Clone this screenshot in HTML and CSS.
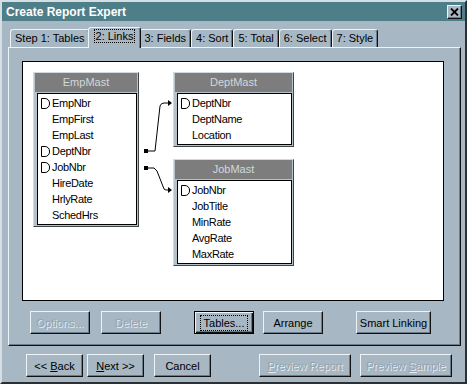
FILE: index.html
```html
<!DOCTYPE html>
<html lang="en">
<head>
	<meta charset="utf-8" />
	<title>Create Report Expert</title>
	<link rel="stylesheet" href="styles.css">
</head>
<body>
	<div class="window">
		<div class="titlebar">
			<span class="title">Create Report Expert</span>
			<span class="close">
				<svg width="9" height="8" viewBox="0 0 9 8"><path d="M1 0.5 L8 7.5 M8 0.5 L1 7.5" stroke="#000" stroke-width="1.8" fill="none"/></svg>
			</span>
		</div>

		<div class="tabs">
			<div class="tab">Step 1: Tables</div>
			<div class="tab active"><span class="focus">2: Links</span></div>
			<div class="tab">3: Fields</div>
			<div class="tab">4: Sort</div>
			<div class="tab">5: Total</div>
			<div class="tab">6: Select</div>
			<div class="tab">7: Style</div>
		</div>

		<div class="panel">
			<div class="canvas">
				<!-- join lines between the tables -->
				<svg class="links" width="420" height="238">
					<rect x="121" y="87" width="4" height="4" fill="#000"/>
					<path d="M125 89 H132 L134 71 L137 44 Q138 41 141 41 H146" stroke="#000" fill="none"/>
					<polygon points="145,38 149,41 145,44" fill="#000"/>
					<rect x="121" y="104" width="4" height="4" fill="#000"/>
					<path d="M125 106 H131 L134 109 L141 127 Q142 128 144 128 H146" stroke="#000" fill="none"/>
					<polygon points="145,125 149,128 145,131" fill="#000"/>
				</svg>

				<div class="tbl emp">
					<div class="head">EmpMast</div>
					<ul>
						<li class="key">EmpNbr</li>
						<li>EmpFirst</li>
						<li>EmpLast</li>
						<li class="key">DeptNbr</li>
						<li class="key">JobNbr</li>
						<li>HireDate</li>
						<li>HrlyRate</li>
						<li>SchedHrs</li>
					</ul>
				</div>

				<div class="tbl dept">
					<div class="head">DeptMast</div>
					<ul>
						<li class="key">DeptNbr</li>
						<li>DeptName</li>
						<li>Location</li>
					</ul>
				</div>

				<div class="tbl job">
					<div class="head">JobMast</div>
					<ul>
						<li class="key">JobNbr</li>
						<li>JobTitle</li>
						<li>MinRate</li>
						<li>AvgRate</li>
						<li>MaxRate</li>
					</ul>
				</div>
			</div>

			<div class="actions">
				<button class="btn" disabled>Options...</button>
				<button class="btn" disabled>Delete</button>
				<button class="btn default wide-gap"><span class="focus">Tables...</span></button>
				<button class="btn">Arrange</button>
				<button class="btn smart wide-gap">Smart Linking</button>
			</div>
		</div>

		<div class="footer">
			<button class="btn nav">&lt;&lt; <u>B</u>ack</button>
			<button class="btn nav"><u>N</u>ext &gt;&gt;</button>
			<button class="btn nav cancel">Cancel</button>
			<button class="btn preview" disabled><u>P</u>review Report</button>
			<button class="btn preview" disabled>Preview <u>S</u>ample</button>
		</div>
	</div>
</body>
</html>
```

FILE: styles.css
```css
body{
	margin: 0;
	padding: 0;
	font: 11px "Liberation Sans", Arial, sans-serif;
	background: #a7b7c3;
}

.window{
	width: 467px;
	height: 384px;
	box-sizing: border-box;
	border: 2px solid;
	border-color: #d4dee4 #2a3034 #2a3034 #d4dee4;
	background: #a7b7c3;
	display: flex;
	flex-direction: column;
}

.titlebar{
	height: 19px;
	background: #4e7e88;
	display: flex;
	align-items: center;
	justify-content: space-between;
	padding: 0 3px 0 4px;
}

.titlebar .title{
	color: #fff;
	font-weight: bold;
	font-size: 12px;
}

.titlebar .close{
	width: 15px;
	height: 14px;
	box-sizing: border-box;
	border: 1px solid;
	border-color: #eef3f6 #111 #111 #eef3f6;
	box-shadow: inset -1px -1px #6b7b87;
	background: #a7b7c3;
	display: flex;
	align-items: center;
	justify-content: center;
}

/* tab strip */
.tabs{
	display: flex;
	align-items: flex-end;
	height: 20px;
	margin-top: 6px;
	padding-left: 8px;
	position: relative;
	z-index: 2;
}

.tab{
	height: 18px;
	box-sizing: border-box;
	padding: 0 4px;
	line-height: 16px;
	border: 1px solid;
	border-bottom: none;
	border-color: #eef3f6 #111 transparent #eef3f6;
	border-radius: 3px 3px 0 0;
	box-shadow: inset -1px 0 #6b7b87;
}

.tab.active{
	height: 21px;
	margin: 0 -2px -1px -2px;
	padding: 0 5px;
	background: #a7b7c3;
	position: relative;
	z-index: 3;
}

.tab .focus{
	border: 1px dotted #000;
	padding: 0 1px;
}

.panel{
	height: 299px;
	box-sizing: border-box;
	margin: 0 4px 0 6px;
	padding: 13px 0 0 13px;
	border: 1px solid;
	border-color: #eef3f6 #111 #111 #eef3f6;
	box-shadow: inset -1px -1px #6b7b87;
	position: relative;
	z-index: 1;
}

/* white link canvas */
.canvas{
	width: 422px;
	height: 240px;
	box-sizing: border-box;
	border: 1px solid #000;
	background: #fff;
	position: relative;
}

.links{
	position: absolute;
	top: 0;
	left: 0;
}

.tbl{
	position: absolute;
	border: 1px solid;
	border-color: #d0dae0 #3c4448 #3c4448 #d0dae0;
	background: #b4c2cc;
	padding: 0 1px 1px 1px;
}

.tbl.emp{
	left: 10px;
	top: 10px;
	width: 102px;
}

.tbl.dept{
	left: 150px;
	top: 10px;
	width: 117px;
}

.tbl.job{
	left: 150px;
	top: 97px;
	width: 117px;
}

.tbl .head{
	height: 19px;
	line-height: 19px;
	background: #7d7d7d;
	color: #d2d8dc;
	text-align: center;
}

.tbl ul{
	list-style: none;
	margin: 1px 0 0 2px;
	padding: 1px 0;
	background: #fff;
	border: 1px solid #000;
}

.tbl li{
	height: 16px;
	line-height: 16px;
	padding-left: 14px;
	position: relative;
	letter-spacing: -0.3px;
}

.tbl li.key::before{
	content: "";
	position: absolute;
	left: 3px;
	top: 3px;
	width: 7px;
	height: 9px;
	border: 1px solid #000;
	border-radius: 0 5px 5px 0;
}

/* buttons */
.btn{
	height: 23px;
	width: 60px;
	box-sizing: border-box;
	padding: 0;
	border: 1px solid;
	border-color: #eef3f6 #111 #111 #eef3f6;
	box-shadow: inset -1px -1px #6b7b87;
	background: #a7b7c3;
	font: 11px "Liberation Sans", Arial, sans-serif;
	color: #000;
}

.btn:disabled{
	color: #93a3af;
	text-shadow: 1px 1px 0 #e8eef2;
}

.btn.default{
	border-color: #000;
	box-shadow: inset 1px 1px #eef3f6, inset -1px -1px #111, inset -2px -2px #6b7b87;
}

.btn.default .focus{
	border: 1px dotted #000;
	padding: 1px 3px;
}

.actions{
	display: flex;
	gap: 11px;
	margin: 10px 0 0 8px;
}

.actions .wide-gap{
	margin-left: 22px;
}

.actions .btn.default{
	margin-right: -2px;
}

.actions .btn.smart{
	width: 75px;
}

.footer{
	display: flex;
	gap: 4px;
	margin: 8px 0 0 24px;
}

.footer .btn.nav{
	width: 57px;
}

.footer .btn.cancel{
	margin-left: 6px;
}

.footer .btn.preview{
	width: 92px;
	margin-left: 5px;
}

.footer .cancel + .preview{
	margin-left: 44px;
}
```
